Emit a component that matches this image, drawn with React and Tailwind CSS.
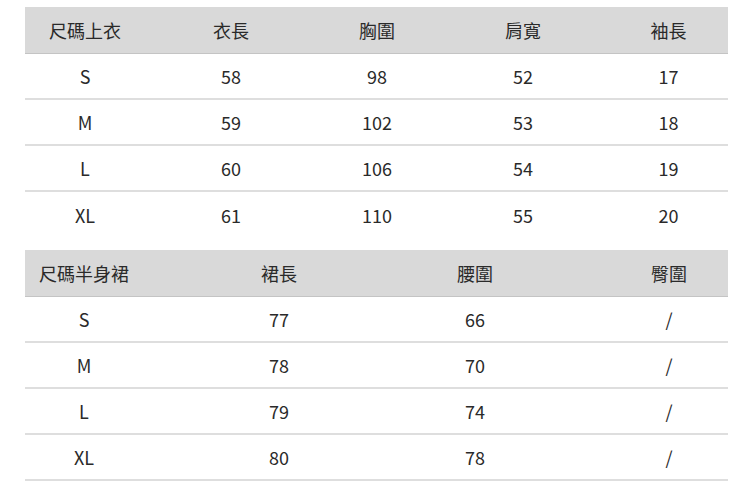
const tops = {
  head: ['尺碼上衣', '衣長', '胸圍', '肩寬', '袖長'],
  rows: [
    ['S', '58', '98', '52', '17'],
    ['M', '59', '102', '53', '18'],
    ['L', '60', '106', '54', '19'],
    ['XL', '61', '110', '55', '20'],
  ],
};

const skirts = {
  head: ['尺碼半身裙', '裙長', '腰圍', '臀圍'],
  rows: [
    ['S', '77', '66', '/'],
    ['M', '78', '70', '/'],
    ['L', '79', '74', '/'],
    ['XL', '80', '78', '/'],
  ],
};

function SizeTable({ data, cols, lastPad, noLastBorder }) {
  const cell = (v, i, n) => (
    <div
      key={i}
      className={`flex items-center justify-center ${i === n - 1 ? lastPad : ''}`}
    >
      {v}
    </div>
  );

  return (
    <div className="w-[703px]">
      <div className={`grid ${cols} h-[47px] bg-[#d9d9d9] border-b border-[#c4c4c4]`}>
        {data.head.map((h, i) => cell(h, i, data.head.length))}
      </div>
      {data.rows.map((r, ri) => (
        <div
          key={ri}
          className={`grid ${cols} h-[46px] ${
            noLastBorder && ri === data.rows.length - 1 ? '' : 'border-b-2 border-[#dedede]'
          }`}
        >
          {r.map((v, i) => cell(v, i, r.length))}
        </div>
      ))}
    </div>
  );
}

export default function App() {
  return (
    <div
      className="min-h-screen bg-white pt-[7px] pl-[25px] text-[18px] text-[#2a2a2a]"
      style={{ fontFamily: '"Noto Sans CJK TC", "Noto Sans", sans-serif' }}
    >
      <SizeTable
        data={tops}
        cols="grid-cols-[120px_172px_120px_172px_119px]"
        lastPad=""
        noLastBorder
      />
      <div className="mt-[12px]">
        <SizeTable
          data={skirts}
          cols="grid-cols-[118px_272px_120px_193px]"
          lastPad="pl-[75px]"
        />
      </div>
    </div>
  );
}
